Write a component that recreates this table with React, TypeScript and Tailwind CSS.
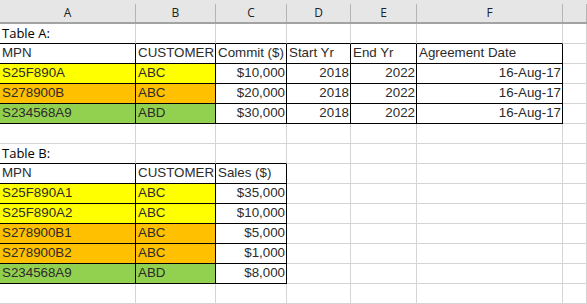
import React from "react";

type C = {
  t?: string;
  r?: boolean;
  bg?: string;
  br?: boolean;
  bb?: boolean;
  label?: boolean;
};

const Y = "bg-[#ffff00]";
const O = "bg-[#ffc000]";
const G = "bg-[#92d050]";

const e = (n: number, o: C = {}): C[] => Array.from({ length: n }, () => ({ ...o }));

const rows: C[][] = [
  [
    { t: "Table A:", label: true, bb: true },
    ...e(5, { bb: true }),
    {},
  ],
  [
    { t: "MPN", br: true, bb: true },
    { t: "CUSTOMER", br: true, bb: true },
    { t: "Commit ($)", br: true, bb: true },
    { t: "Start Yr", br: true, bb: true },
    { t: "End Yr", br: true, bb: true },
    { t: "Agreement Date", br: true, bb: true },
    {},
  ],
  [
    { t: "S25F890A", bg: Y, br: true, bb: true },
    { t: "ABC", bg: Y, br: true, bb: true },
    { t: "$10,000", r: true, br: true, bb: true },
    { t: "2018", r: true, br: true, bb: true },
    { t: "2022", r: true, br: true, bb: true },
    { t: "16-Aug-17", r: true, br: true, bb: true },
    {},
  ],
  [
    { t: "S278900B", bg: O, br: true, bb: true },
    { t: "ABC", bg: O, br: true, bb: true },
    { t: "$20,000", r: true, br: true, bb: true },
    { t: "2018", r: true, br: true, bb: true },
    { t: "2022", r: true, br: true, bb: true },
    { t: "16-Aug-17", r: true, br: true, bb: true },
    {},
  ],
  [
    { t: "S234568A9", bg: G, br: true, bb: true },
    { t: "ABD", bg: G, br: true, bb: true },
    { t: "$30,000", r: true, br: true, bb: true },
    { t: "2018", r: true, br: true, bb: true },
    { t: "2022", r: true, br: true, bb: true },
    { t: "16-Aug-17", r: true, br: true, bb: true },
    {},
  ],
  e(7),
  [{ t: "Table B:", label: true, bb: true }, ...e(2, { bb: true }), ...e(4)],
  [
    { t: "MPN", br: true, bb: true },
    { t: "CUSTOMER", br: true, bb: true },
    { t: "Sales ($)", br: true, bb: true },
    ...e(4),
  ],
  [
    { t: "S25F890A1", bg: Y, br: true, bb: true },
    { t: "ABC", bg: Y, br: true, bb: true },
    { t: "$35,000", r: true, br: true, bb: true },
    ...e(4),
  ],
  [
    { t: "S25F890A2", bg: Y, br: true, bb: true },
    { t: "ABC", bg: Y, br: true, bb: true },
    { t: "$10,000", r: true, br: true, bb: true },
    ...e(4),
  ],
  [
    { t: "S278900B1", bg: O, br: true, bb: true },
    { t: "ABC", bg: O, br: true, bb: true },
    { t: "$5,000", r: true, br: true, bb: true },
    ...e(4),
  ],
  [
    { t: "S278900B2", bg: O, br: true, bb: true },
    { t: "ABC", bg: O, br: true, bb: true },
    { t: "$1,000", r: true, br: true, bb: true },
    ...e(4),
  ],
  [
    { t: "S234568A9", bg: G, br: true, bb: true },
    { t: "ABD", bg: G, br: true, bb: true },
    { t: "$8,000", r: true, br: true, bb: true },
    ...e(4),
  ],
  e(7),
];

function Cell({ c }: { c: C }) {
  const cls = [
    "h-[20px] border-r border-b overflow-hidden whitespace-nowrap",
    c.br ? "border-r-black" : "border-r-[#d4d4d4]",
    c.bb ? "border-b-black" : "border-b-[#d4d4d4]",
    c.bg ?? "bg-white",
    c.r ? "text-right pr-[1px]" : "pl-[2px]",
    c.label
      ? "font-['Open_Sans',sans-serif] text-[13px] leading-[19px] text-black"
      : "font-['Liberation_Sans',Arial,sans-serif] text-[13.33px] leading-[18px] text-[#2b2b2b]",
  ].join(" ");
  return <div className={cls}>{c.t ?? ""}</div>;
}

const letters = ["A", "B", "C", "D", "E", "F", ""];

export default function App() {
  return (
    <div className="w-[587px] h-[304px] overflow-hidden bg-white">
      <div className="grid grid-cols-[136px_80px_71px_64px_66px_146px_24px] h-[24px] bg-[#e6e6e6] border-b-2 border-b-[#a3a3a3]">
        {letters.map((l, i) => (
          <div key={i} className="flex h-[22px]">
            <div className="flex-1 text-center pt-[2px] leading-[21px] text-[12px] font-['Open_Sans',sans-serif] text-[#222222]">
              {l}
            </div>
            <div className="w-px mt-[4px] bg-[#b4b4b4]" />
          </div>
        ))}
      </div>
      <div className="grid grid-cols-[136px_80px_71px_64px_66px_146px_24px]">
        {rows.map((row, ri) =>
          row.map((c, ci) => <Cell key={ri + "-" + ci} c={c} />)
        )}
      </div>
    </div>
  );
}
